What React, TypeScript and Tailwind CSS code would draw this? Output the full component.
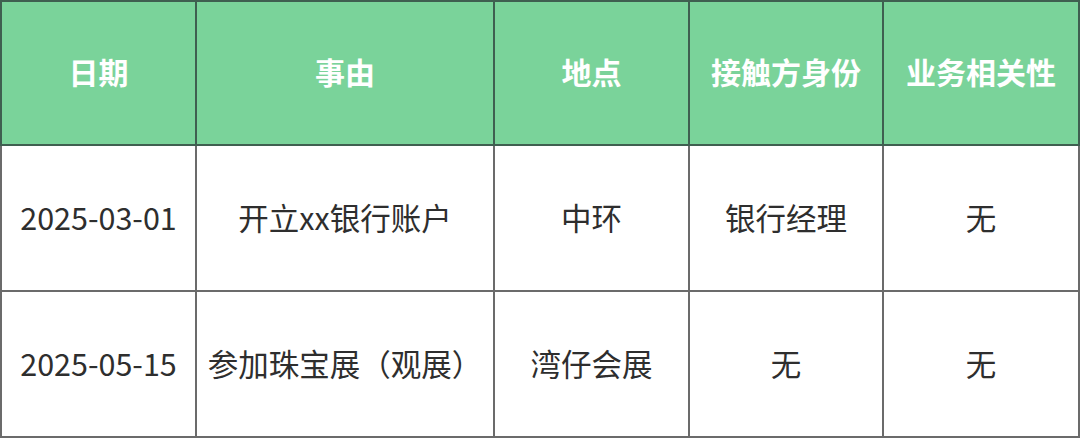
import React from "react";

const cols = [195, 298, 195, 194, 196];
const header = ["日期", "事由", "地点", "接触方身份", "业务相关性"];
const rows = [
  ["2025-03-01", "开立xx银行账户", "中环", "银行经理", "无"],
  ["2025-05-15", "参加珠宝展（观展）", "湾仔会展", "无", "无"],
];

export default function App() {
  return (
    <div
      className="w-[1080px] h-[438px] bg-white"
      style={{ fontFamily: '"Noto Sans CJK SC", "Noto Sans", sans-serif' }}
    >
      <table className="border-collapse table-fixed w-[1079px]">
        <colgroup>
          {cols.map((w, i) => (
            <col key={i} style={{ width: w }} />
          ))}
        </colgroup>
        <thead>
          <tr className="h-[144px] bg-[#7ad39a]">
            {header.map((h, i) => (
              <th
                key={i}
                className="border-2 border-[#3f5f50] text-white font-bold text-[30px] text-center align-middle p-0 pb-[4px]"
              >
                {h}
              </th>
            ))}
          </tr>
        </thead>
        <tbody>
          {rows.map((r, ri) => (
            <tr key={ri} className="h-[146px]">
              {r.map((c, ci) => (
                <td
                  key={ci}
                  className="border-2 border-[#6b6b6b] text-[#2e2e2e] font-normal text-[30.5px] text-center align-middle p-0 whitespace-nowrap"
                >
                  {c}
                </td>
              ))}
            </tr>
          ))}
        </tbody>
      </table>
    </div>
  );
}
